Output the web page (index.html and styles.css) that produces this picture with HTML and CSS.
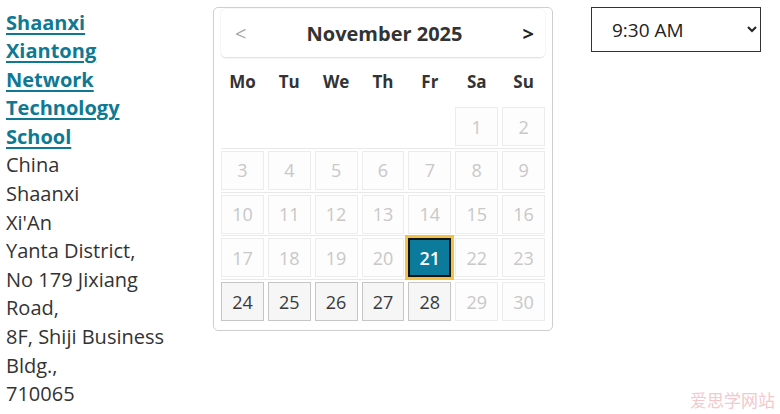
FILE: index.html
```html
<!DOCTYPE html>
<html>
<head>
<meta charset="utf-8">
<link rel="stylesheet" href="styles.css">
</head>
<body>
<div class="page">
  <div class="address">
    <a class="name" href="#">Shaanxi Xiantong Network Technology School</a>
    <div>China</div>
    <div>Shaanxi</div>
    <div>Xi'An</div>
    <div>Yanta District,</div>
    <div>No 179 Jixiang Road,</div>
    <div>8F, Shiji Business Bldg.,</div>
    <div>710065</div>
  </div>
  <div class="calendar">
    <div class="cal-head">
      <span class="nav prev">&lt;</span>
      <span class="title">November 2025</span>
      <span class="nav next">&gt;</span>
    </div>
    <div class="dow">
      <span>Mo</span><span>Tu</span><span>We</span><span>Th</span><span>Fr</span><span>Sa</span><span>Su</span>
    </div>
    <div class="week">
      <span class="empty"></span><span class="empty"></span><span class="empty"></span><span class="empty"></span><span class="empty"></span>
      <span class="day off">1</span><span class="day off">2</span>
    </div>
    <div class="week">
      <span class="day off">3</span><span class="day off">4</span><span class="day off">5</span><span class="day off">6</span><span class="day off">7</span><span class="day off">8</span><span class="day off">9</span>
    </div>
    <div class="week">
      <span class="day off">10</span><span class="day off">11</span><span class="day off">12</span><span class="day off">13</span><span class="day off">14</span><span class="day off">15</span><span class="day off">16</span>
    </div>
    <div class="week">
      <span class="day off">17</span><span class="day off">18</span><span class="day off">19</span><span class="day off">20</span><span class="day selected">21</span><span class="day off">22</span><span class="day off">23</span>
    </div>
    <div class="week last">
      <span class="day">24</span><span class="day">25</span><span class="day">26</span><span class="day">27</span><span class="day">28</span><span class="day off">29</span><span class="day off">30</span>
    </div>
  </div>
  <select class="time">
    <option>9:30 AM</option>
  </select>
</div>
<div class="watermark">爱思学网站</div>
</body>
</html>
```
FILE: styles.css
```css
html, body {
  margin: 0;
  padding: 0;
  background: #fff;
}
body {
  font-family: "Open Sans", "Noto Sans CJK SC", sans-serif;
  color: #333;
}
.page {
  display: flex;
  align-items: flex-start;
  padding: 7px 0 0 6px;
}
.address {
  width: 172px;
  font-size: 20px;
  line-height: 28.6px;
  color: #333;
  margin-top: 1.5px;
}
.address .name {
  display: block;
  font-weight: 700;
  color: #0f7994;
  text-decoration: underline;
  text-decoration-thickness: 2px;
  text-underline-offset: 3px;
}
.calendar {
  width: 340px;
  box-sizing: border-box;
  margin-left: 35px;
  border: 1px solid #cfcfcf;
  border-radius: 5px;
  padding: 0 7px 7px;
}
.cal-head {
  display: flex;
  align-items: center;
  justify-content: space-between;
  height: 48px;
  margin-top: 1px;
  border-bottom: 1px solid #e2e2e2;
  border-radius: 5px;
  box-shadow: 0 0 0 1px #f6f6f6;
  padding: 0 11px 0 14px;
}
.cal-head .title {
  font-size: 20px;
  font-weight: 700;
  color: #333;
  margin-left: 0;
}
.cal-head .nav {
  font-size: 20px;
  font-weight: 700;
}
.cal-head .prev {
  color: #a8a8a8;
  font-weight: 400;
}
.cal-head .next {
  color: #222;
}
.dow {
  display: grid;
  grid-template-columns: repeat(7, 1fr);
  column-gap: 4px;
  height: 47px;
  align-items: center;
  font-size: 17px;
  font-weight: 700;
  color: #333;
  text-align: center;
}
.week {
  display: grid;
  grid-template-columns: repeat(7, 1fr);
  column-gap: 4px;
  padding: 2px 0 1.75px;
  border-bottom: 1px solid #e8e8e8;
}
.week.last {
  border-bottom: none;
}
.day, .empty {
  height: 39px;
  box-sizing: border-box;
  display: flex;
  align-items: center;
  justify-content: center;
  font-size: 18px;
}
.day {
  border: 1px solid #c6c6c6;
  background: #f6f6f6;
  color: #3a3a3a;
}
.day.off {
  border-color: #ececec;
  background: #fdfdfd;
  color: #c8c8c8;
}
.day.selected {
  border: 2px solid #111;
  background: #0b7a9b;
  color: #fff;
  font-weight: 600;
  outline: 3px solid #f2c244;
  outline-offset: 0;
}
.time {
  margin-left: 38px;
  width: 170px;
  height: 45px;
  font-family: "Open Sans", sans-serif;
  font-size: 19px;
  color: #222;
  background: #fff;
  border: 1px solid #333;
  border-radius: 0;
  padding: 0 0 0 16px;
}
.watermark {
  position: absolute;
  right: 5px;
  bottom: 2px;
  font-size: 17px;
  color: #f2c9cd;
  font-family: "Noto Sans CJK SC", sans-serif;
}
```
